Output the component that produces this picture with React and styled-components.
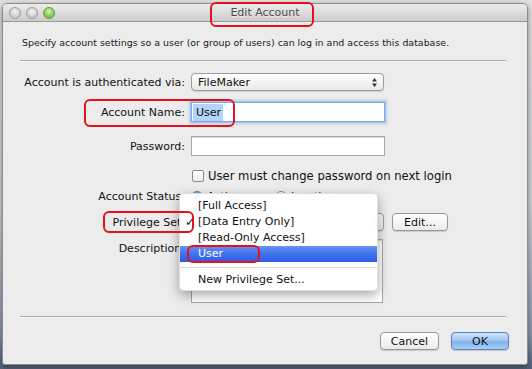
import React from 'react'
import styled, { createGlobalStyle } from 'styled-components'

const GlobalStyle = createGlobalStyle`
  html, body {
    margin: 0;
    padding: 0;
    background: #d9d9d9;
  }
  * { box-sizing: border-box; }
`;

const Desktop = styled.div`
  position: relative;
  width: 532px;
  height: 369px;
  padding: 3px 0 0 2px;
  overflow: hidden;
  font-family: 'DejaVu Sans', 'Liberation Sans', sans-serif;
  font-size: 11px;
  color: #111;
  background: linear-gradient(to bottom, #e4e4e4 0%, #d2d4d8 55%, #8e9ab0 90%, #55627c 100%);
`;

const Window = styled.div`
  position: relative;
  width: 526px;
  height: 362px;
  background: #ececec;
  border: 1px solid #8c8c8c;
  border-radius: 5px 5px 3px 3px;
  box-shadow: 0 2px 6px rgba(0, 0, 0, 0.45);
`;

const TitleBar = styled.div`
  position: relative;
  height: 18px;
  display: flex;
  align-items: center;
  gap: 5px;
  padding-left: 6px;
  border-radius: 4px 4px 0 0;
  border-bottom: 1px solid #9a9a9a;
  background: linear-gradient(to bottom, #ececec 0%, #dcdcdc 50%, #cbcbcb 100%);
`;

const Light = styled.span`
  width: 12px;
  height: 12px;
  border-radius: 50%;
  border: 1px solid ${p => (p.$green ? '#6a9a50' : '#9d9d9d')};
  background: ${p =>
    p.$green
      ? 'radial-gradient(circle at 50% 35%, #d4f5b8 0%, #93d468 45%, #5ea43a 100%)'
      : 'radial-gradient(circle at 50% 35%, #f4f4f4 0%, #d6d6d6 50%, #b8b8b8 100%)'};
`;

const Title = styled.div`
  position: absolute;
  left: 0;
  right: 0;
  top: 0;
  bottom: 0;
  display: flex;
  align-items: center;
  justify-content: center;
  font-size: 11px;
  color: #4a4a4a;
  text-shadow: 0 1px 0 rgba(255, 255, 255, 0.6);
`;

const Body = styled.div`
  padding: 14px 21px 0 17px;
`;

const Intro = styled.p`
  margin: 0;
  height: 14px;
  line-height: 14px;
  font-size: 9.45px;
  padding-left: 2px;
  white-space: nowrap;
  color: #1a1a1a;
`;

const Separator = styled.div`
  margin-top: ${p => p.$mt}px;
  height: 2px;
  border-top: 1px solid #a8a8a8;
  border-bottom: 1px solid #fafafa;
`;

const Row = styled.div`
  display: grid;
  grid-template-columns: 165px 1fr;
  column-gap: 6px;
  align-items: ${p => (p.$top ? 'start' : 'center')};
  height: ${p => p.$h}px;
  margin-top: ${p => p.$mt}px;
`;

const Label = styled.div`
  text-align: right;
  white-space: nowrap;
  line-height: 13px;
  padding-top: ${p => p.$pt || 0}px;
`;

const Controls = styled.div`
  display: flex;
  align-items: center;
  height: 100%;
`;

const PopUp = styled.div`
  position: relative;
  width: 193px;
  height: 18px;
  display: flex;
  align-items: center;
  padding-left: 6px;
  border: 1px solid #9c9c9c;
  border-radius: 4px;
  background: linear-gradient(to bottom, #ffffff 0%, #f4f4f4 50%, #e9e9e9 100%);
  box-shadow: 0 1px 1px rgba(0, 0, 0, 0.12);
`;

const Arrows = styled.svg`
  position: absolute;
  right: 6px;
  top: 4px;
`;

const TextField = styled.div`
  width: 194px;
  height: 20px;
  display: flex;
  align-items: center;
  padding-left: 1px;
  background: #fff;
  border: 1px solid ${p => (p.$focused ? '#7da9de' : '#a6a6a6')};
  box-shadow: ${p =>
    p.$focused ? '0 0 0 1px #a7c8ee, 0 0 2px 2px rgba(120, 165, 225, 0.45)' : 'inset 0 1px 0 #d8d8d8'};
`;

const Selected = styled.span`
  background: #b4d3fb;
  padding: 2px 2px 2px 3px;
  line-height: 13px;
`;

const Check = styled.span`
  width: 12px;
  height: 12px;
  margin-left: 1px;
  border: 1px solid #8a8a8a;
  border-radius: 2px;
  background: linear-gradient(to bottom, #ffffff, #ececec);
`;

const Radio = styled.span`
  width: 12px;
  height: 12px;
  border-radius: 50%;
  border: 1px solid ${p => (p.$on ? '#5c7fb4' : '#8a8a8a')};
  background: ${p =>
    p.$on
      ? 'radial-gradient(circle at 50% 50%, #1e2c48 0 2px, #8fb6ea 3px, #5b8fd8 100%)'
      : 'linear-gradient(to bottom, #ffffff, #ececec)'};
`;

const OptionText = styled.span`
  margin-left: ${p => p.$ml}px;
  white-space: nowrap;
  font-size: ${p => p.$size || 11}px;
`;

const Spacer = styled.span`
  width: ${p => p.$w}px;
`;

const TextArea = styled.div`
  width: 192px;
  height: 64px;
  background: #fff;
  border: 1px solid #a6a6a6;
  box-shadow: inset 0 1px 0 #dadada;
`;

const Button = styled.div`
  width: ${p => p.$w}px;
  height: 18px;
  margin-left: ${p => p.$ml || 0}px;
  display: flex;
  align-items: center;
  justify-content: center;
  border-radius: 4px;
  border: 1px solid ${p => (p.$default ? '#5a84bd' : '#979797')};
  background: ${p =>
    p.$default
      ? 'linear-gradient(to bottom, #cfe3fa 0%, #a3c8f2 45%, #7fb1ec 55%, #a9cff5 100%)'
      : 'linear-gradient(to bottom, #ffffff 0%, #f6f6f6 50%, #e9e9e9 100%)'};
  box-shadow: 0 1px 1px rgba(0, 0, 0, 0.15);
  color: #111;
`;

const Footer = styled.div`
  display: flex;
  justify-content: flex-end;
  margin: 14px -3px 0 0;
`;

const Menu = styled.div`
  position: absolute;
  left: 176px;
  top: 189px;
  width: 199px;
  height: 98px;
  padding-top: 4px;
  background: rgba(255, 255, 255, 0.98);
  border: 1px solid rgba(0, 0, 0, 0.12);
  border-radius: 5px;
  box-shadow: 0 4px 12px rgba(0, 0, 0, 0.35);
  z-index: 2;
`;

const MenuItem = styled.div`
  position: relative;
  height: 16px;
  line-height: 16px;
  padding-left: 18px;
  white-space: nowrap;
  color: ${p => (p.$hi ? '#fff' : '#111')};
  background: ${p => (p.$hi ? 'linear-gradient(to bottom, #6b92f3 0%, #4172ec 50%, #2b5ce6 100%)' : 'none')};
`;

const Tick = styled.span`
  position: absolute;
  left: 5px;
  top: 0;
  font-size: 12px;
  font-weight: bold;
`;

const MenuSeparator = styled.div`
  height: 10px;
  display: flex;
  align-items: center;
  &::after {
    content: '';
    flex: 1;
    height: 1px;
    background: #dcdcdc;
  }
`;

const Callout = styled.div`
  position: absolute;
  left: ${p => p.$x}px;
  top: ${p => p.$y}px;
  width: ${p => p.$w}px;
  height: ${p => p.$h}px;
  border: 2.5px solid #e4131b;
  border-radius: 6px;
  z-index: 5;
  pointer-events: none;
`;

export default function App() {
  return (
    <>
      <GlobalStyle />
      <Desktop>
        <Window>
          <TitleBar>
            <Light />
            <Light />
            <Light $green />
            <Title>Edit Account</Title>
          </TitleBar>

          <Body>
            <Intro>Specify account settings so a user (or group of users) can log in and access this database.</Intro>
            <Separator $mt={10} />

            <Row $h={18} $mt={11}>
              <Label>Account is authenticated via:</Label>
              <Controls>
                <PopUp>
                  FileMaker
                  <Arrows width="5" height="9" viewBox="0 0 5 9">
                    <path d="M0 3.5 L2.5 0 L5 3.5 Z M0 5.5 L2.5 9 L5 5.5 Z" fill="#333" />
                  </Arrows>
                </PopUp>
              </Controls>
            </Row>

            <Row $h={20} $mt={11}>
              <Label>Account Name:</Label>
              <Controls>
                <TextField $focused>
                  <Selected>User</Selected>
                </TextField>
              </Controls>
            </Row>

            <Row $h={20} $mt={14}>
              <Label>Password:</Label>
              <Controls>
                <TextField />
              </Controls>
            </Row>

            <Row $h={13} $mt={13}>
              <span />
              <Controls>
                <Check />
                <OptionText $ml={4} $size={11.6}>User must change password on next login</OptionText>
              </Controls>
            </Row>

            <Row $h={12} $mt={8}>
              <Label>Account Status:</Label>
              <Controls>
                <Radio $on />
                <OptionText $ml={4}>Active</OptionText>
                <Spacer $w={34} />
                <Radio />
                <OptionText $ml={4}>Inactive</OptionText>
              </Controls>
            </Row>

            <Row $h={18} $mt={11}>
              <Label>Privilege Set:</Label>
              <Controls>
                <PopUp>
                  [Data Entry Only]
                  <Arrows width="5" height="9" viewBox="0 0 5 9">
                    <path d="M0 3.5 L2.5 0 L5 3.5 Z M0 5.5 L2.5 9 L5 5.5 Z" fill="#333" />
                  </Arrows>
                </PopUp>
                <Button $w={56} $ml={8}>Edit...</Button>
              </Controls>
            </Row>

            <Row $h={64} $mt={8} $top>
              <Label $pt={3}>Description:</Label>
              <TextArea />
            </Row>

            <Separator $mt={13} />

            <Footer>
              <Button $w={59}>Cancel</Button>
              <Button $w={58} $ml={12} $default>OK</Button>
            </Footer>
          </Body>

          <Menu>
            <MenuItem>[Full Access]</MenuItem>
            <MenuItem>
              <Tick>✓</Tick>[Data Entry Only]
            </MenuItem>
            <MenuItem>[Read-Only Access]</MenuItem>
            <MenuItem $hi>User</MenuItem>
            <MenuSeparator />
            <MenuItem>New Privilege Set...</MenuItem>
          </Menu>
        </Window>

        <Callout $x={210} $y={2} $w={104} $h={25} />
        <Callout $x={84} $y={99} $w={151} $h={28} />
        <Callout $x={103} $y={211} $w={91} $h={22} />
        <Callout $x={187} $y={245} $w={73} $h={18} />
      </Desktop>
    </>
  )
}
